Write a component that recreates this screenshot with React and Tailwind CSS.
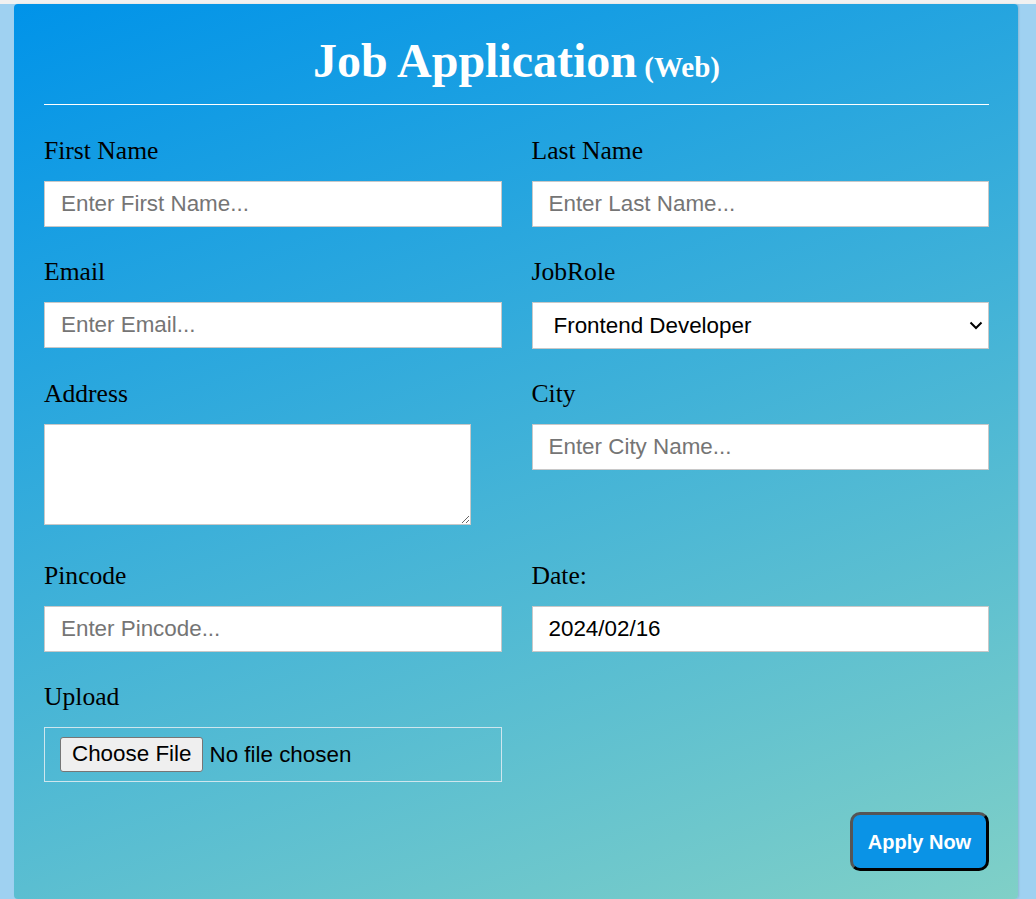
import React from "react";

const serif = { fontFamily: '"Liberation Serif", "Times New Roman", serif' };
const sans = { fontFamily: '"Liberation Sans", Arial, sans-serif' };

function Label({ children }) {
  return (
    <label className="block text-[25.6px] leading-[28px] text-black mb-[16px]" style={serif}>
      {children}
    </label>
  );
}

function TextInput({ placeholder, value }) {
  return (
    <input
      type="text"
      placeholder={placeholder}
      defaultValue={value}
      className="block w-full h-[46px] bg-white border border-[#c8c8c8] pl-[16px] text-[22.4px] text-black placeholder:text-[#757575] outline-none"
      style={sans}
    />
  );
}

export default function App() {
  return (
    <div className="w-[1036px] h-[899px] overflow-hidden bg-[#9fd1f1] flex flex-col">
      <div className="h-[4px] bg-[#f1f1f1] shrink-0" />
      <div className="ml-[14px] w-[1004px] flex-1 rounded-[4px] bg-[linear-gradient(160deg,#0093E9_0%,#80D0C7_100%)] pt-[30px] pl-[30px] pr-[29px] pb-[27px] shadow-[1px_0_2px_rgba(0,0,0,0.12)]">
        <h1 className="text-center text-white font-bold text-[48px] leading-[53px]" style={serif}>
          Job Application<span className="text-[29px]"> (Web)</span>
        </h1>
        <div className="mt-[10px] h-px bg-white" />
        <div className="mt-[32px] grid grid-cols-2 gap-x-[30px] gap-y-[31px] items-start">
          <div>
            <Label>First Name</Label>
            <TextInput placeholder="Enter First Name..." />
          </div>
          <div>
            <Label>Last Name</Label>
            <TextInput placeholder="Enter Last Name..." />
          </div>
          <div>
            <Label>Email</Label>
            <TextInput placeholder="Enter Email..." />
          </div>
          <div>
            <Label>JobRole</Label>
            <div className="relative h-[47px]">
              <select
                defaultValue="fe"
                className="appearance-none block w-full h-[47px] bg-white border border-[#c8c8c8] pl-[21px] text-[22.4px] text-black outline-none"
                style={sans}
              >
                <option value="fe">Frontend Developer</option>
                <option value="be">Backend Developer</option>
              </select>
              <svg
                className="absolute right-[6px] top-[19px] pointer-events-none"
                width="14"
                height="9"
                viewBox="0 0 14 9"
              >
                <polyline points="1.5,1.5 7,7 12.5,1.5" fill="none" stroke="#000" strokeWidth="2" />
              </svg>
            </div>
          </div>
          <div>
            <Label>Address</Label>
            <textarea
              className="block w-[427px] h-[101px] bg-white border border-[#c8c8c8] mb-[6px] outline-none resize"
              style={sans}
            />
          </div>
          <div>
            <Label>City</Label>
            <TextInput placeholder="Enter City Name..." />
          </div>
          <div>
            <Label>Pincode</Label>
            <TextInput placeholder="Enter Pincode..." />
          </div>
          <div>
            <Label>Date:</Label>
            <TextInput value="2024/02/16" />
          </div>
          <div>
            <Label>Upload</Label>
            <div className="h-[55px] border border-[#cfe6ee] flex items-center pl-[15px]" style={sans}>
              <button
                type="button"
                className="h-[35px] px-[11px] bg-[#efefef] border border-[#767676] rounded-[3px] text-[22.4px] text-black leading-none"
                style={sans}
              >
                Choose File
              </button>
              <span className="ml-[6px] text-[22.4px] text-black">No file chosen</span>
            </div>
          </div>
          <div />
        </div>
        <div className="mt-[30px] flex justify-end">
          <button
            type="button"
            className="w-[139px] h-[59px] rounded-[10px] bg-[#0a93e6] text-white font-bold text-[20px] border-[3px] border-t-[#555] border-l-[#555] border-b-black border-r-black"
            style={sans}
          >
            Apply Now
          </button>
        </div>
      </div>
    </div>
  );
}
